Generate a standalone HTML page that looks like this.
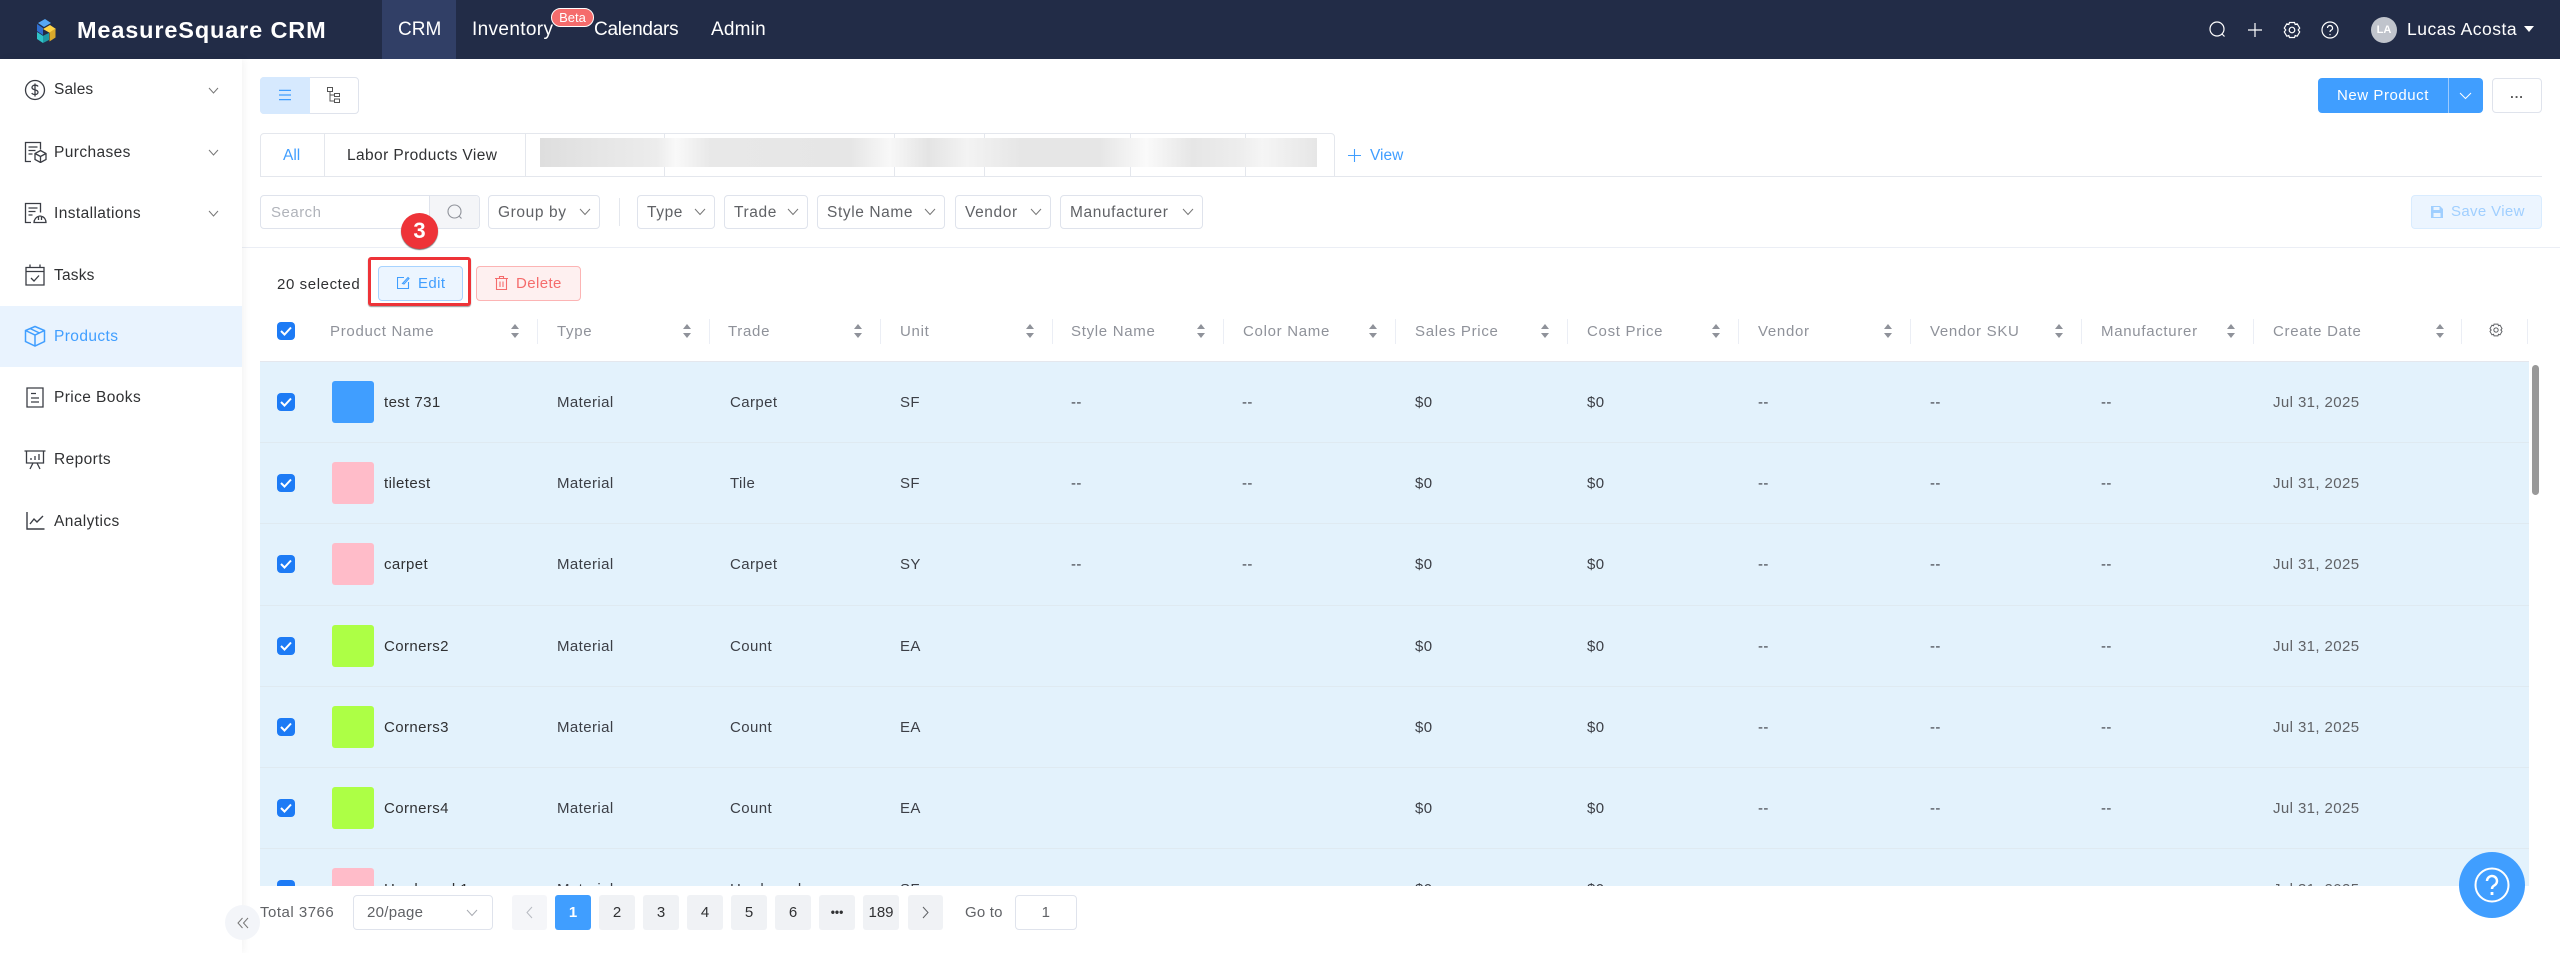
<!DOCTYPE html>
<html><head><meta charset="utf-8"><style>
*{box-sizing:border-box}
html,body{margin:0;padding:0;width:2560px;height:953px;overflow:hidden;background:#fff;font-family:"Liberation Sans","Noto Sans CJK SC",sans-serif;font-size:15.5px;color:#303133}
.a,.a>*{position:absolute}
div,span,svg{position:absolute;white-space:nowrap}
.c{display:flex;align-items:center;justify-content:center}
.nav{top:17px;font-size:19px;color:#fff;line-height:26px}
.si{left:54px;font-size:15.5px;line-height:20px;letter-spacing:.4px;color:#303133}
.box{border:1px solid #dfe3ec;border-radius:4px;background:#fff;color:#606266;letter-spacing:.3px}
.f{top:195px;height:34px;padding-left:9px;line-height:34px;font-size:15.5px;letter-spacing:.6px}
.f svg{right:8px;top:12px}
.h{top:323px;color:#8f929a;line-height:18px;letter-spacing:.7px;font-size:15px}
.d{top:319px;height:25px;width:1px;background:#ebeef5}
.s{top:322px;width:10px;height:18px}
.r{left:260px;width:2269px;height:81.2px;background:#e3f2fc;border-bottom:1px solid #dfeaf1}
.r>span{top:31px;line-height:20px;font-size:15px;letter-spacing:.4px;color:#3c3f46}
.cb{left:17px;top:31px;width:18px;height:18px;border-radius:4px;background:#1d7bf5}
.th{left:72px;top:19px;width:42px;height:42px;border-radius:3px}
.n{left:124px;color:#303133!important}
.c1{left:297px}.c2{left:470px}.c3{left:640px}.c4{left:811px}.c5{left:982px}.c6{left:1155px}.c7{left:1327px}.c8{left:1498px}.c9{left:1670px}.c10{left:1841px}.c11{left:2013px;color:#606266!important}
.p{top:895px;width:36px;height:35px;border-radius:3px;background:#f0f2f5;color:#303133;font-size:15px}
</style></head><body>

<div style="left:0;top:0;width:2560px;height:59px;background:#222c47"></div>
<svg style="left:30px;top:15px" width="30" height="30" viewBox="0 0 30 30">
<path d="M8 8l7-4 6 4-7 4z" fill="#57a8f5"/><path d="M7 9l6 4v7l-6-4z" fill="#2f6fd0"/><path d="M15 13l7-4 6 4-6 4z" fill="#ffd447" transform="translate(-2 1)"/><path d="M20 18l6-4v9l-6 4z" fill="#d9a92b" transform="translate(-.5 -.5)"/><path d="M7 17l6 4 6-3v0l-6 4z" fill="#3bd3d3"/><path d="M7 17l6 4v7l-6-4z" fill="#2fc3c8"/><path d="M13 21l6-3v7l-6 3z" fill="#1f9aa5"/></svg>
<div style="left:77px;top:15px;font-size:23.5px;line-height:30px;font-weight:700;color:#fff;letter-spacing:.85px">MeasureSquare CRM</div>
<div style="left:382px;top:0;width:74px;height:59px;background:#313f66"></div>
<div class="nav" style="left:398px">CRM</div>
<div class="nav" style="left:472px;letter-spacing:.35px">Inventory</div>
<div class="c" style="left:551px;top:8px;width:43px;height:19px;background:#f56c6c;border:1px solid #fff;border-radius:10px;color:#fff;font-size:13px">Beta</div>
<div class="nav" style="left:594px;letter-spacing:-.25px">Calendars</div>
<div class="nav" style="left:711px;letter-spacing:.2px">Admin</div>
<svg style="left:2208px;top:20px" width="19" height="19" viewBox="0 0 19 19" fill="none" stroke="#fff" stroke-width="1.2"><circle cx="9" cy="9" r="7"/><path d="M14 14l2.500 2.500"/></svg>
<svg style="left:2247px;top:22px" width="16" height="16" viewBox="0 0 16 16" stroke="#fff" stroke-width="1.2"><path d="M1 8h14M8 1v14"/></svg>
<svg style="left:2283px;top:21px" width="18" height="18" viewBox="0 0 18 18" fill="none" stroke="#fff" stroke-width="1.200"><path d="M6.500 1.500h5l.7 2 2-.7 2.500 4.300-1.500 1.900 1.500 1.900-2.500 4.300-2-.7-.7 2h-5l-.7-2-2 .7L1.300 10.900 2.800 9 1.300 7.100 3.800 2.800l2 .7z"/><circle cx="9" cy="9" r="2.800"/></svg>
<svg style="left:2321px;top:21px" width="18" height="18" viewBox="0 0 18 18" fill="none" stroke="#fff" stroke-width="1.200"><circle cx="9" cy="9" r="8"/><path d="M6.500 7a2.500 2.500 0 1 1 3.500 2.300c-.7.4-1 .8-1 1.700"/><path d="M9 13v1.200"/></svg>
<div class="c" style="left:2371px;top:17px;width:26px;height:26px;border-radius:50%;background:#c0c4cc;color:#fff;font-size:11px;font-weight:700">LA</div>
<div style="left:2407px;top:16px;font-size:17.500px;line-height:26px;color:#fff;letter-spacing:.5px">Lucas Acosta</div>
<div style="left:2524px;top:26px;width:0;height:0;border-left:5.500px solid transparent;border-right:5.500px solid transparent;border-top:6px solid #fff"></div>

<div style="left:0;top:59px;width:242px;height:894px;background:#fff;box-shadow:2px 0 8px rgba(0,0,0,.05);z-index:2"></div>
<div style="left:0;top:306px;width:242px;height:61px;background:#e9f3fe;z-index:3"></div>
<div style="left:0;top:0;z-index:4;width:242px;height:953px">
<svg style="left:24px;top:79px" width="22" height="22" viewBox="0 0 22 22" fill="none" stroke="#3a3d44" stroke-width="1.300"><circle cx="11" cy="11" r="9.500"/><path d="M14 7.500c-.5-1-1.600-1.300-3-1.300-1.500 0-3 .7-3 2.300 0 3.300 6 1.500 6 4.700 0 1.600-1.500 2.300-3 2.300s-2.700-.5-3.200-1.500M11 4.500v13"/></svg>
<svg style="left:24px;top:141px" width="23" height="22" viewBox="0 0 23 22" fill="none" stroke="#3a3d44" stroke-width="1.300"><path d="M7 20.500H1.500V1.500h15v7M4.500 6h9M4.500 9.500h7M4.500 13h4"/><path d="M16.500 9.500l5.500 3v6l-5.500 3-5.500-3v-6zM11 12.500l5.500 3 5.500-3M16.500 15.500v6"/></svg>
<svg style="left:24px;top:202px" width="23" height="22" viewBox="0 0 23 22" fill="none" stroke="#3a3d44" stroke-width="1.300"><path d="M7 20.500H1.500V1.500h15v9M4.500 6h9M4.500 9.500h7M4.500 13h4"/><path d="M10 20.500h12c0-2-1-6-6-6.500-4 .5-6 4-6 6.500zM14.500 15v3M17.500 15v3" /></svg>
<svg style="left:25px;top:264px" width="20" height="22" viewBox="0 0 20 22" fill="none" stroke="#3a3d44" stroke-width="1.300"><path d="M1 3.500h18v17.500H1zM1 7.500h18M5 .500v3M15 .500v3M6 14l3 3 5-5.500"/></svg>
<svg style="left:24px;top:325px" width="22" height="22" viewBox="0 0 22 22" fill="none" stroke="#409eff" stroke-width="1.500"><path d="M11 1.500l9.500 4v11l-9.500 4.500-9.500-4.500v-11zM1.500 5.500L11 10l9.500-4.500M11 10v11M6 3.500l9.500 4.500"/></svg>
<svg style="left:26px;top:387px" width="18" height="21" viewBox="0 0 18 21" fill="none" stroke="#3a3d44" stroke-width="1.300"><path d="M1 1h16v19H1zM5 6.500h5M5 11h8M5 15h8"/></svg>
<svg style="left:24px;top:450px" width="22" height="20" viewBox="0 0 22 20" fill="none" stroke="#3a3d44" stroke-width="1.300"><path d="M.5 1h21M2.500 1v12h17V1M6 19l3-6M16 19l-3-6M7 10V8M11 10V6M15 10V4"/></svg>
<svg style="left:26px;top:511px" width="19" height="20" viewBox="0 0 19 20" fill="none" stroke="#3a3d44" stroke-width="1.400"><path d="M1 1v17h17.500M4 13l4-5 3 3 6-6"/></svg>
<span class="si" style="top:80px;letter-spacing:.1px">Sales</span><span class="si" style="top:143px">Purchases</span><span class="si" style="top:204px">Installations</span><span class="si" style="top:266px;letter-spacing:.2px">Tasks</span><span class="si" style="top:327px;color:#409eff">Products</span><span class="si" style="top:388px">Price Books</span><span class="si" style="top:450px">Reports</span><span class="si" style="top:512px">Analytics</span>
<svg style="left:208px;top:87px" width="11" height="7" viewBox="0 0 11 7" fill="none" stroke="#777" stroke-width="1"><path d="M1 1l4.500 5L10 1"/></svg>
<svg style="left:208px;top:149px" width="11" height="7" viewBox="0 0 11 7" fill="none" stroke="#777" stroke-width="1"><path d="M1 1l4.500 5L10 1"/></svg>
<svg style="left:208px;top:210px" width="11" height="7" viewBox="0 0 11 7" fill="none" stroke="#777" stroke-width="1"><path d="M1 1l4.500 5L10 1"/></svg>
</div>

<div style="left:260px;top:77px;width:99px;height:37px;border:1px solid #dfe3ec;border-radius:4px"></div>
<div style="left:260px;top:77px;width:50px;height:37px;background:#d6e9fe;border-radius:4px 0 0 4px"></div>
<svg style="left:279px;top:89px" width="12" height="12" viewBox="0 0 13 12" stroke="#409eff" stroke-width="1.300"><path d="M0 1h13M0 6h13M0 11h13"/></svg>
<svg style="left:327px;top:87px" width="13" height="16" viewBox="0 0 13 16" fill="none" stroke="#555" stroke-width="1"><path d="M.5 .5h5v4h-5zM7.500 6.500h5v3h-5zM7.500 12h5v3.500h-5zM3 4.500V14h4.500M3 8h4.500"/></svg>

<div style="left:260px;top:133px;width:1075px;height:44px;border:1px solid #e4e7ed;border-radius:4px 4px 0 0"></div>
<div style="left:324px;top:133px;width:1px;height:43px;background:#e4e7ed"></div>
<div style="left:525px;top:133px;width:1px;height:43px;background:#e4e7ed"></div>
<div style="left:664px;top:133px;width:1px;height:43px;background:#e4e7ed"></div>
<div style="left:894px;top:133px;width:1px;height:43px;background:#e4e7ed"></div>
<div style="left:984px;top:133px;width:1px;height:43px;background:#e4e7ed"></div>
<div style="left:1130px;top:133px;width:1px;height:43px;background:#e4e7ed"></div>
<div style="left:1245px;top:133px;width:1px;height:43px;background:#e4e7ed"></div>
<div style="left:283px;top:145.500px;color:#409eff;line-height:20px">All</div>
<div style="left:347px;top:145.500px;line-height:20px;letter-spacing:.4px">Labor Products View</div>
<div style="left:540px;top:138px;width:777px;height:29px;background:linear-gradient(90deg,#dedede 0,#e6e6e6 8%,#ececec 15%,#f9f9f9 17.500%,#e8e8e8 22%,#e6e6e6 40%,#f8f8f8 45%,#e4e4e4 50%,#f3f3f3 55%,#e6e6e6 62%,#e6e6e6 72%,#fafafa 78%,#e6e6e6 84%,#ededed 90%,#f5f5f5 93%,#e6e6e6 100%)"></div>
<svg style="left:1348px;top:149px" width="13" height="13" viewBox="0 0 13 13" stroke="#409eff" stroke-width="1.100"><path d="M0 6.500h13M6.500 0v13"/></svg>
<div style="left:1370px;top:145.500px;color:#409eff;line-height:20px">View</div>
<div style="left:260px;top:176px;width:2282px;height:1px;background:#e4e7ed"></div>

<div class="c" style="left:2318px;top:78px;width:130px;height:35px;background:#409eff;border-radius:4px 0 0 4px;color:#fff;font-size:15px;letter-spacing:.55px">New Product</div>
<div style="left:2448px;top:78px;width:35px;height:35px;background:#409eff;border-left:1px solid #9ccbff;border-radius:0 4px 4px 0"></div>
<svg style="left:2459px;top:92px" width="13" height="8" viewBox="0 0 13 8" fill="none" stroke="#fff" stroke-width="1"><path d="M1 1l5.500 5.500L12 1"/></svg>
<div class="box c" style="left:2492px;top:78px;width:50px;height:35px;color:#555;font-size:13px;font-weight:700;letter-spacing:1px;padding-bottom:5px">...</div>

<div class="box" style="left:260px;top:195px;width:220px;height:34px"></div>
<div style="left:429px;top:196px;width:50px;height:32px;background:#f4f5f8;border-left:1px solid #dfe3ec;border-radius:0 4px 4px 0"></div>
<svg style="left:447px;top:204px" width="16" height="16" viewBox="0 0 16 16" fill="none" stroke="#8f929a" stroke-width="1.100"><circle cx="7.500" cy="7.500" r="6.500"/><path d="M12 12l2.500 2.500"/></svg>
<div style="left:271px;top:203px;color:#b0b3ba;line-height:20px;font-size:15px;letter-spacing:.5px">Search</div>
<div class="box f" style="left:488px;width:112px">Group by<svg width="12" height="8" viewBox="0 0 12 8" fill="none" stroke="#777"><path d="M1 1l5 5.500L11 1"/></svg></div>
<div style="left:619px;top:198px;width:1px;height:28px;background:#e4e7ed"></div>
<div class="box f" style="left:637px;width:78px">Type<svg width="12" height="8" viewBox="0 0 12 8" fill="none" stroke="#777"><path d="M1 1l5 5.500L11 1"/></svg></div>
<div class="box f" style="left:724px;width:84px">Trade<svg width="12" height="8" viewBox="0 0 12 8" fill="none" stroke="#777"><path d="M1 1l5 5.500L11 1"/></svg></div>
<div class="box f" style="left:817px;width:128px">Style Name<svg width="12" height="8" viewBox="0 0 12 8" fill="none" stroke="#777"><path d="M1 1l5 5.500L11 1"/></svg></div>
<div class="box f" style="left:955px;width:96px">Vendor<svg width="12" height="8" viewBox="0 0 12 8" fill="none" stroke="#777"><path d="M1 1l5 5.500L11 1"/></svg></div>
<div class="box f" style="left:1060px;width:143px">Manufacturer<svg width="12" height="8" viewBox="0 0 12 8" fill="none" stroke="#777"><path d="M1 1l5 5.500L11 1"/></svg></div>
<div style="left:2411px;top:195px;width:131px;height:34px;background:#ecf5ff;border:1px solid #d9ecff;border-radius:4px"></div>
<svg style="left:2431px;top:206px" width="12" height="12" viewBox="0 0 12 12" fill="#a0cfff"><path d="M0 0h9l3 3v9H0zM2.500 1v3h6V1zM2.500 7v4h7V7z"/></svg>
<div style="left:2451px;top:202px;color:#a0cfff;line-height:20px;font-size:15px;letter-spacing:.35px">Save View</div>
<div style="left:242px;top:247px;width:2318px;height:1px;background:#ebeef5"></div>

<div style="left:277px;top:275px;line-height:20px;font-size:15px;letter-spacing:.6px">20 selected</div>
<div style="left:368px;top:257px;width:103px;height:49px;border:3.500px solid #ee3338;border-radius:3px;box-shadow:0 1px 1px rgba(0,0,0,.4)"></div>
<div style="left:378px;top:266px;width:85px;height:35px;background:#ecf5ff;border:1px solid #a8d3ff;border-radius:4px"></div>
<svg style="left:397px;top:276px" width="13" height="13" viewBox="0 0 13 13" fill="none" stroke="#409eff" stroke-width="1.100"><path d="M7 1.500H.5v11h11V6M5.500 7.500L11 1.500l1 1-5 5.500z"/></svg>
<div style="left:418px;top:274px;color:#409eff;line-height:20px;letter-spacing:.4px;font-size:15px">Edit</div>
<div style="left:476px;top:266px;width:105px;height:35px;background:#fef0f0;border:1px solid #fcb4b4;border-radius:4px"></div>
<svg style="left:495px;top:276px" width="13" height="14" viewBox="0 0 13 14" fill="none" stroke="#f56c6c" stroke-width="1.100"><path d="M0 2.500h13M4.500 2.500V.5h4v2M1.500 2.500v11h10v-11M5 5.500v5.500M8 5.500v5.500"/></svg>
<div style="left:516px;top:274px;color:#f56c6c;line-height:20px;letter-spacing:.4px;font-size:15px">Delete</div>
<div class="c" style="left:401px;top:213px;width:37px;height:36px;border-radius:50%;background:#ee3338;color:#fff;font-size:22px;font-weight:700;box-shadow:0 1px 1px rgba(0,0,0,.55);z-index:5">3</div>

<div class="cb" style="left:277px;top:322px"><svg style="left:3px;top:4px" width="12" height="10" viewBox="0 0 12 10" fill="none" stroke="#fff" stroke-width="2"><path d="M1 5l3.500 3.500L11 1.500"/></svg></div>
<span class="h" style="left:330px">Product Name</span><span class="h" style="left:557px">Type</span><span class="h" style="left:728px">Trade</span><span class="h" style="left:900px">Unit</span><span class="h" style="left:1071px">Style Name</span><span class="h" style="left:1243px">Color Name</span><span class="h" style="left:1415px">Sales Price</span><span class="h" style="left:1587px">Cost Price</span><span class="h" style="left:1758px">Vendor</span><span class="h" style="left:1930px">Vendor SKU</span><span class="h" style="left:2101px">Manufacturer</span><span class="h" style="left:2273px">Create Date</span>
<svg class="s" style="left:510px" viewBox="0 0 10 18" fill="#8f929a"><path d="M5 2l4 5H1zM5 16l4-5H1z"/></svg><svg class="s" style="left:682px" viewBox="0 0 10 18" fill="#8f929a"><path d="M5 2l4 5H1zM5 16l4-5H1z"/></svg><svg class="s" style="left:853px" viewBox="0 0 10 18" fill="#8f929a"><path d="M5 2l4 5H1zM5 16l4-5H1z"/></svg><svg class="s" style="left:1025px" viewBox="0 0 10 18" fill="#8f929a"><path d="M5 2l4 5H1zM5 16l4-5H1z"/></svg><svg class="s" style="left:1196px" viewBox="0 0 10 18" fill="#8f929a"><path d="M5 2l4 5H1zM5 16l4-5H1z"/></svg><svg class="s" style="left:1368px" viewBox="0 0 10 18" fill="#8f929a"><path d="M5 2l4 5H1zM5 16l4-5H1z"/></svg><svg class="s" style="left:1540px" viewBox="0 0 10 18" fill="#8f929a"><path d="M5 2l4 5H1zM5 16l4-5H1z"/></svg><svg class="s" style="left:1711px" viewBox="0 0 10 18" fill="#8f929a"><path d="M5 2l4 5H1zM5 16l4-5H1z"/></svg><svg class="s" style="left:1883px" viewBox="0 0 10 18" fill="#8f929a"><path d="M5 2l4 5H1zM5 16l4-5H1z"/></svg><svg class="s" style="left:2054px" viewBox="0 0 10 18" fill="#8f929a"><path d="M5 2l4 5H1zM5 16l4-5H1z"/></svg><svg class="s" style="left:2226px" viewBox="0 0 10 18" fill="#8f929a"><path d="M5 2l4 5H1zM5 16l4-5H1z"/></svg><svg class="s" style="left:2435px" viewBox="0 0 10 18" fill="#8f929a"><path d="M5 2l4 5H1zM5 16l4-5H1z"/></svg>
<div class="d" style="left:537px"></div><div class="d" style="left:709px"></div><div class="d" style="left:880px"></div><div class="d" style="left:1052px"></div><div class="d" style="left:1223px"></div><div class="d" style="left:1395px"></div><div class="d" style="left:1567px"></div><div class="d" style="left:1738px"></div><div class="d" style="left:1910px"></div><div class="d" style="left:2081px"></div><div class="d" style="left:2253px"></div><div class="d" style="left:2461px"></div><div class="d" style="left:2527px"></div>
<svg style="left:2489px;top:323px" width="14" height="14" viewBox="0 0 18 18" fill="none" stroke="#606266" stroke-width="1.300"><path d="M6.500 1.500h5l.7 2 2-.7 2.500 4.300-1.500 1.900 1.500 1.900-2.500 4.300-2-.7-.7 2h-5l-.7-2-2 .7L1.300 10.900 2.800 9 1.300 7.100 3.800 2.800l2 .7z"/><circle cx="9" cy="9" r="2.800"/></svg>
<div style="left:260px;top:361px;width:2269px;height:1px;background:#e4e7ed"></div>

<div class="r" style="top:362px"><div class="cb"><svg style="left:3px;top:4px" width="12" height="10" viewBox="0 0 12 10" fill="none" stroke="#fff" stroke-width="2"><path d="M1 5l3.500 3.500L11 1.500"/></svg></div><div class="th" style="background:#409eff"></div><span class="n">test 731</span><span class="c1">Material</span><span class="c2">Carpet</span><span class="c3">SF</span><span class="c4">--</span><span class="c5">--</span><span class="c6">$0</span><span class="c7">$0</span><span class="c8">--</span><span class="c9">--</span><span class="c10">--</span><span class="c11">Jul 31, 2025</span></div>
<div class="r" style="top:443.200px"><div class="cb"><svg style="left:3px;top:4px" width="12" height="10" viewBox="0 0 12 10" fill="none" stroke="#fff" stroke-width="2"><path d="M1 5l3.500 3.500L11 1.500"/></svg></div><div class="th" style="background:#ffbcc9"></div><span class="n">tiletest</span><span class="c1">Material</span><span class="c2">Tile</span><span class="c3">SF</span><span class="c4">--</span><span class="c5">--</span><span class="c6">$0</span><span class="c7">$0</span><span class="c8">--</span><span class="c9">--</span><span class="c10">--</span><span class="c11">Jul 31, 2025</span></div>
<div class="r" style="top:524.400px"><div class="cb"><svg style="left:3px;top:4px" width="12" height="10" viewBox="0 0 12 10" fill="none" stroke="#fff" stroke-width="2"><path d="M1 5l3.500 3.500L11 1.500"/></svg></div><div class="th" style="background:#ffbcc9"></div><span class="n">carpet</span><span class="c1">Material</span><span class="c2">Carpet</span><span class="c3">SY</span><span class="c4">--</span><span class="c5">--</span><span class="c6">$0</span><span class="c7">$0</span><span class="c8">--</span><span class="c9">--</span><span class="c10">--</span><span class="c11">Jul 31, 2025</span></div>
<div class="r" style="top:605.600px"><div class="cb"><svg style="left:3px;top:4px" width="12" height="10" viewBox="0 0 12 10" fill="none" stroke="#fff" stroke-width="2"><path d="M1 5l3.500 3.500L11 1.500"/></svg></div><div class="th" style="background:#adff45"></div><span class="n">Corners2</span><span class="c1">Material</span><span class="c2">Count</span><span class="c3">EA</span><span class="c6">$0</span><span class="c7">$0</span><span class="c8">--</span><span class="c9">--</span><span class="c10">--</span><span class="c11">Jul 31, 2025</span></div>
<div class="r" style="top:686.800px"><div class="cb"><svg style="left:3px;top:4px" width="12" height="10" viewBox="0 0 12 10" fill="none" stroke="#fff" stroke-width="2"><path d="M1 5l3.500 3.500L11 1.500"/></svg></div><div class="th" style="background:#adff45"></div><span class="n">Corners3</span><span class="c1">Material</span><span class="c2">Count</span><span class="c3">EA</span><span class="c6">$0</span><span class="c7">$0</span><span class="c8">--</span><span class="c9">--</span><span class="c10">--</span><span class="c11">Jul 31, 2025</span></div>
<div class="r" style="top:768px"><div class="cb"><svg style="left:3px;top:4px" width="12" height="10" viewBox="0 0 12 10" fill="none" stroke="#fff" stroke-width="2"><path d="M1 5l3.500 3.500L11 1.500"/></svg></div><div class="th" style="background:#adff45"></div><span class="n">Corners4</span><span class="c1">Material</span><span class="c2">Count</span><span class="c3">EA</span><span class="c6">$0</span><span class="c7">$0</span><span class="c8">--</span><span class="c9">--</span><span class="c10">--</span><span class="c11">Jul 31, 2025</span></div>
<div class="r" style="top:849.200px"><div class="cb"></div><div class="th" style="background:#ffbcc9"></div><span class="n">Hardwood 1</span><span class="c1">Material</span><span class="c2">Hardwood</span><span class="c3">SF</span><span class="c4">--</span><span class="c5">--</span><span class="c6">$0</span><span class="c7">$0</span><span class="c8">--</span><span class="c9">--</span><span class="c10">--</span><span class="c11">Jul 31, 2025</span></div>
<div style="left:2532px;top:365px;width:7px;height:130px;border-radius:4px;background:#999"></div>

<div style="left:242px;top:886px;width:2318px;height:67px;background:#fff"></div>
<div style="left:260px;top:903px;line-height:20px;font-size:15px;color:#606266;letter-spacing:.5px">Total 3766</div>
<div class="box" style="left:353px;top:895px;width:140px;height:35px;padding-left:13px;line-height:33px;font-size:15px">20/page<svg style="right:14px;top:13px" width="12" height="8" viewBox="0 0 12 8" fill="none" stroke="#a8abb2"><path d="M1 1l5 5.500L11 1"/></svg></div>
<div class="p c" style="left:512px;width:35px;background:#f5f6f9"><svg style="position:static" width="7" height="13" viewBox="0 0 7 13" fill="none" stroke="#b8bbc2"><path d="M6 1L1 6.500 6 12"/></svg></div>
<div class="p c" style="left:555px;background:#409eff;color:#fff;font-weight:700">1</div>
<div class="p c" style="left:599px">2</div><div class="p c" style="left:643px">3</div><div class="p c" style="left:687px">4</div><div class="p c" style="left:731px">5</div><div class="p c" style="left:775px">6</div>
<div class="p c" style="left:819px;font-weight:700;font-size:12px;padding-bottom:1px">•••</div>
<div class="p c" style="left:863px">189</div>
<div class="p c" style="left:908px;width:35px"><svg style="position:static" width="7" height="13" viewBox="0 0 7 13" fill="none" stroke="#606266"><path d="M1 1l5 5.500L1 12"/></svg></div>
<div style="left:965px;top:903px;line-height:20px;font-size:15px;color:#606266;letter-spacing:.2px">Go to</div>
<div class="box c" style="left:1015px;top:895px;width:62px;height:35px;font-size:15px">1</div>
<div class="c" style="left:225px;top:905px;width:35px;height:35px;border-radius:50%;background:#f3f5f9;z-index:6"><svg style="position:static" width="12" height="12" viewBox="0 0 12 12" fill="none" stroke="#777"><path d="M5.500 1L1 6l4.500 5M11 1L6.500 6l4.500 5"/></svg></div>
<div style="left:2459px;top:852px;width:66px;height:66px;border-radius:50%;background:#409eff;z-index:7"></div>
<svg style="left:2474px;top:867px;z-index:8" width="36" height="36" viewBox="0 0 36 36" fill="none" stroke="#fff" stroke-width="2"><circle cx="18" cy="18" r="16.500"/><path d="M13 14a5 5 0 1 1 7.500 4.300c-1.600.9-2.500 1.700-2.500 3.700" stroke-width="2.500"/><path d="M18 25v3" stroke-width="2.800"/></svg>
</body></html>
